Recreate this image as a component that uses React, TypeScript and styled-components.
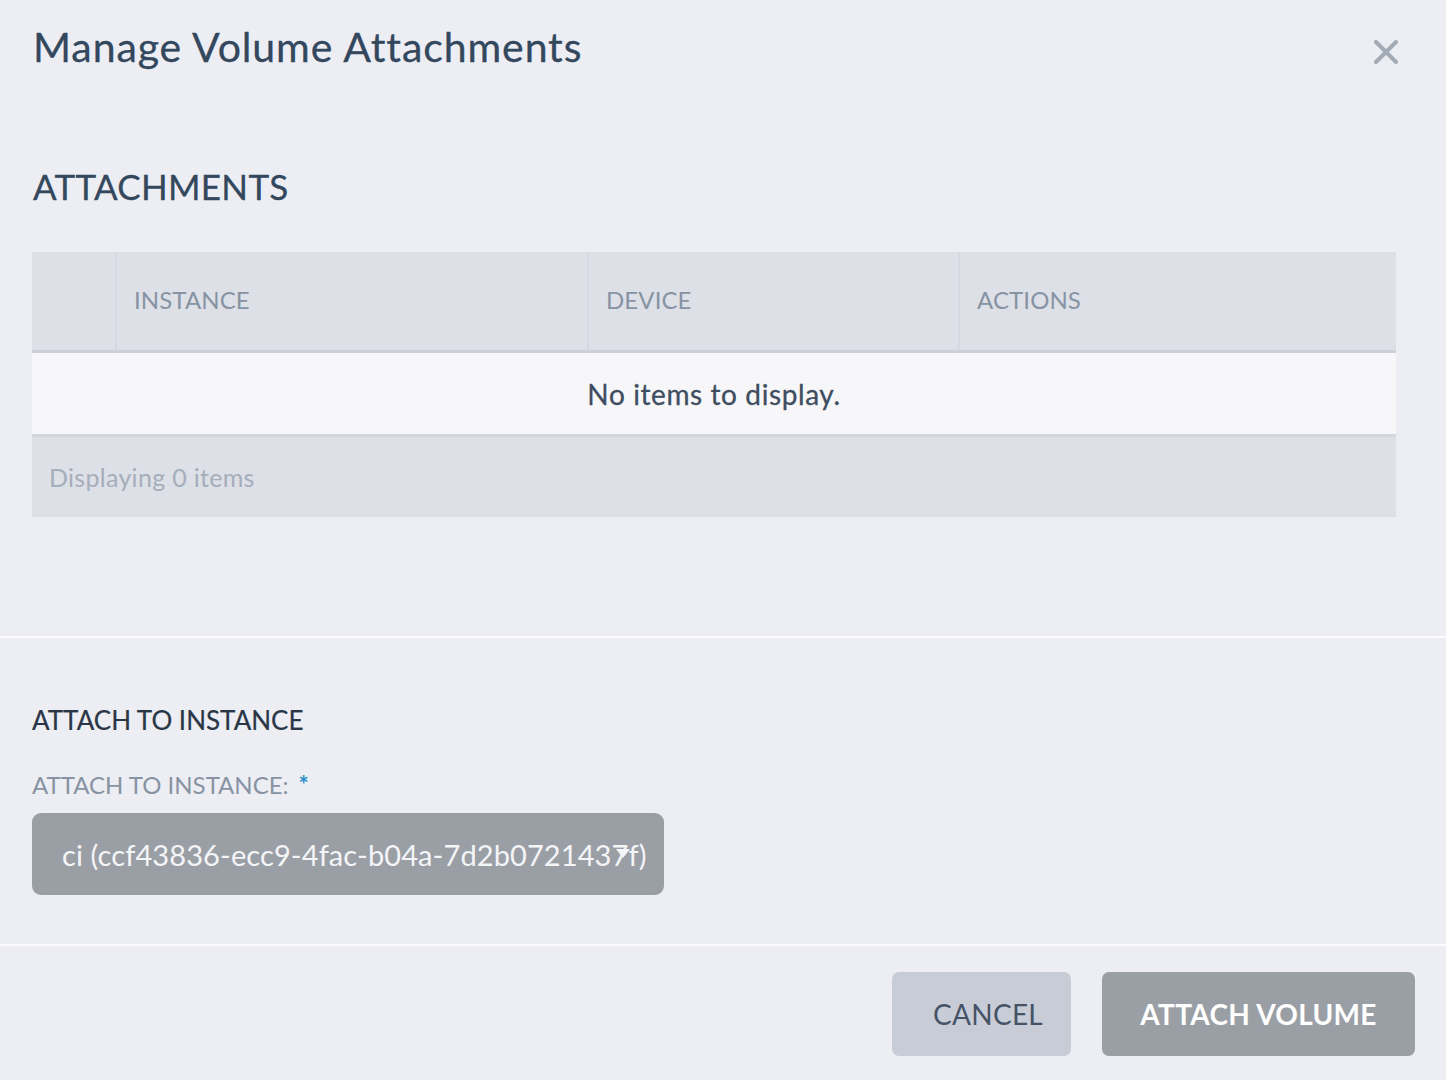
import React from "react";
import styled, { createGlobalStyle } from "styled-components";

const Global = createGlobalStyle`
  html, body { margin: 0; padding: 0; background: #edeef3; }
  body { font-family: Lato, "Open Sans", sans-serif; }
  * { box-sizing: border-box; }
`;

const Modal = styled.div`
  width: 1446px;
  height: 1080px;
  background: #edeef3;
  display: flex;
  flex-direction: column;
`;

const Header = styled.div`
  display: flex;
  justify-content: space-between;
  align-items: flex-start;
  padding: 22px 46px 0 33px;
  height: 166px;
`;

const Title = styled.h1`
  margin: 0;
  font-size: 41px;
  font-weight: 400;
  color: #33475d;
  letter-spacing: 0.9px;
  line-height: 50px;
  -webkit-text-stroke: 0.3px #33475d;
`;

const Close = styled.button`
  border: 0;
  background: transparent;
  padding: 0;
  margin-top: 16px;
  width: 28px;
  height: 28px;
  display: flex;
  align-items: center;
  justify-content: center;
  cursor: pointer;
`;

const Body = styled.div`
  padding: 0 50px 0 32px;
  height: 470px;
`;

const SectionTitle = styled.h2`
  margin: 0 0 0 1px;
  font-size: 35px;
  font-weight: 400;
  color: #33475d;
  line-height: 40px;
  letter-spacing: 0.3px;
  -webkit-text-stroke: 0.3px #33475d;
`;

const Table = styled.div`
  margin-top: 46px;
  display: flex;
  flex-direction: column;
`;

const HeadRow = styled.div`
  display: grid;
  grid-template-columns: 83px 472px 371px 1fr;
  height: 101px;
  background: #dde0e7;
  border-bottom: 3px solid #cbd0da;
`;

const HeadCell = styled.div<{ $first?: boolean }>`
  display: flex;
  align-items: center;
  padding-left: 17px;
  padding-bottom: 4px;
  font-size: 24px;
  color: #8793a3;
  letter-spacing: 0.1px;
  border-left: ${(p) => (p.$first ? "none" : "2px solid #d6d9e1")};
`;

const EmptyRow = styled.div`
  height: 81px;
  background: #f7f7f9;
  display: flex;
  align-items: center;
  justify-content: center;
  font-size: 28px;
  color: #3f4d60;
  letter-spacing: 0.6px;
  -webkit-text-stroke: 0.3px #3f4d60;
`;

const FootRow = styled.div`
  height: 83px;
  background: #dde0e7;
  border-top: 3px solid #d2d6df;
  display: flex;
  align-items: center;
  padding-left: 17px;
  font-size: 25px;
  letter-spacing: 0.3px;
  color: #a6aebb;
`;

const Divider = styled.div`
  height: 2px;
  background: #fbfbfd;
`;

const AttachSection = styled.div`
  padding: 66px 32px 0 32px;
  height: 306px;
`;

const SubTitle = styled.h3`
  margin: 0;
  font-size: 26px;
  font-weight: 400;
  color: #2a3646;
  line-height: 32px;
  -webkit-text-stroke: 0.2px #2a3646;
`;

const Label = styled.label`
  display: block;
  margin-top: 34px;
  font-size: 24px;
  color: #8793a3;
  line-height: 30px;
`;

const Req = styled.span`
  color: #2a8fc7;
  font-weight: 700;
  margin-left: 10px;
`;

const Select = styled.div`
  position: relative;
  margin-top: 13px;
  width: 632px;
  height: 82px;
  background: #9a9fa6;
  border-radius: 9px;
  display: flex;
  align-items: center;
  padding-left: 30px;
  font-size: 29px;
  color: #f4f5f7;
  letter-spacing: 0.1px;
  white-space: nowrap;
  overflow: hidden;
`;

const Caret = styled.span`
  position: absolute;
  left: 584px;
  top: 36px;
  width: 0;
  height: 0;
  border-left: 7px solid transparent;
  border-right: 7px solid transparent;
  border-top: 9px solid #f4f5f7;
`;

const Footer = styled.div`
  display: flex;
  justify-content: flex-end;
  gap: 31px;
  padding: 26px 31px 0 0;
`;

const Button = styled.button<{ $primary?: boolean }>`
  height: 84px;
  padding: ${(p) => (p.$primary ? "0" : "0 0 0 13px")};
  width: ${(p) => (p.$primary ? "313px" : "179px")};
  border: 0;
  border-radius: 7px;
  font-family: Lato, "Open Sans", sans-serif;
  font-size: 28px;
  font-weight: ${(p) => (p.$primary ? 700 : 400)};
  letter-spacing: 0.3px;
  background: ${(p) => (p.$primary ? "#9a9fa6" : "#c8ccd7")};
  color: ${(p) => (p.$primary ? "#ffffff" : "#455366")};
  cursor: pointer;
`;

export default function App() {
  return (
    <>
      <Global />
      <Modal>
        <Header>
          <Title>Manage Volume Attachments</Title>
          <Close aria-label="Close">
            <svg width="24" height="24" viewBox="0 0 24 24">
              <path d="M2 2 L22 22 M22 2 L2 22" stroke="#a3abb7" strokeWidth="4" strokeLinecap="round" />
            </svg>
          </Close>
        </Header>
        <Body>
          <SectionTitle>ATTACHMENTS</SectionTitle>
          <Table>
            <HeadRow>
              <HeadCell $first />
              <HeadCell>INSTANCE</HeadCell>
              <HeadCell>DEVICE</HeadCell>
              <HeadCell>ACTIONS</HeadCell>
            </HeadRow>
            <EmptyRow>No items to display.</EmptyRow>
            <FootRow>Displaying 0 items</FootRow>
          </Table>
        </Body>
        <Divider />
        <AttachSection>
          <SubTitle>ATTACH TO INSTANCE</SubTitle>
          <Label>
            ATTACH TO INSTANCE:<Req>*</Req>
          </Label>
          <Select>
            ci (ccf43836-ecc9-4fac-b04a-7d2b0721437f)
            <Caret />
          </Select>
        </AttachSection>
        <Divider />
        <Footer>
          <Button>CANCEL</Button>
          <Button $primary>ATTACH VOLUME</Button>
        </Footer>
      </Modal>
    </>
  );
}
